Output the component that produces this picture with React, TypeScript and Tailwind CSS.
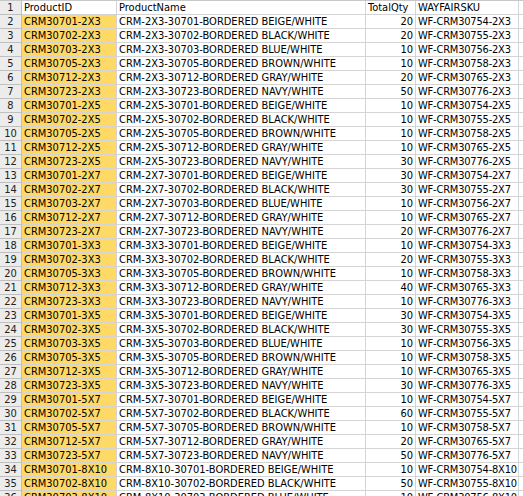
const codes: [string, string, string][] = [
  ['30701', '30754', 'BEIGE'],
  ['30702', '30755', 'BLACK'],
  ['30703', '30756', 'BLUE'],
  ['30705', '30758', 'BROWN'],
  ['30712', '30765', 'GRAY'],
  ['30723', '30776', 'NAVY'],
]

// [code index, size, qty]
const raw: [number, string, number][] = [
  [0, '2X3', 20], [1, '2X3', 20], [2, '2X3', 10], [3, '2X3', 10], [4, '2X3', 20], [5, '2X3', 50],
  [0, '2X5', 10], [1, '2X5', 10], [3, '2X5', 10], [4, '2X5', 10], [5, '2X5', 30],
  [0, '2X7', 30], [1, '2X7', 30], [2, '2X7', 10], [4, '2X7', 10], [5, '2X7', 20],
  [0, '3X3', 10], [1, '3X3', 20], [3, '3X3', 10], [4, '3X3', 40], [5, '3X3', 10],
  [0, '3X5', 30], [1, '3X5', 30], [2, '3X5', 10], [3, '3X5', 10], [4, '3X5', 10], [5, '3X5', 30],
  [0, '5X7', 10], [1, '5X7', 60], [3, '5X7', 10], [4, '5X7', 20], [5, '5X7', 50],
  [0, '8X10', 10], [1, '8X10', 50], [2, '8X10', 10],
]

const rows = raw.map(([i, size, qty]) => {
  const [id, sku, color] = codes[i]
  return {
    id: `CRM${id}-${size}`,
    name: `CRM-${size}-${id}-BORDERED ${color}/WHITE`,
    qty,
    sku: `WF-CRM${sku}-${size}`,
  }
})

const cell = 'h-[14px] border-r border-b border-[#d4d4d4] px-[2px] leading-[14px] whitespace-nowrap overflow-hidden'
const head = 'h-[14px] border-r border-b border-[#bfbfbf] bg-[#ececec] text-center leading-[14px] text-[#222]'

export default function App() {
  return (
    <div className="h-[496px] w-[523px] overflow-hidden bg-white text-[11px] text-black [font-family:'DejaVu_Sans_Condensed','Liberation_Sans',sans-serif]">
      <div className="grid grid-cols-[22px_95px_249px_50px_103px_1fr] border-t border-[#c8c8c8]">
        <div className={head}>1</div>
        <div className={cell}>ProductID</div>
        <div className={cell}>ProductName</div>
        <div className={cell}>TotalQty</div>
        <div className={cell}>WAYFAIRSKU</div>
        <div className={cell}></div>
        {rows.map((r, n) => (
          <div key={r.id} className="contents">
            <div className={head}>{n + 2}</div>
            <div className={`${cell} bg-[#ffd966]`}>{r.id}</div>
            <div className={cell}>{r.name}</div>
            <div className={`${cell} text-right`}>{r.qty}</div>
            <div className={`${cell} tracking-[-0.2px]`}>{r.sku}</div>
            <div className={cell}></div>
          </div>
        ))}
      </div>
    </div>
  )
}
